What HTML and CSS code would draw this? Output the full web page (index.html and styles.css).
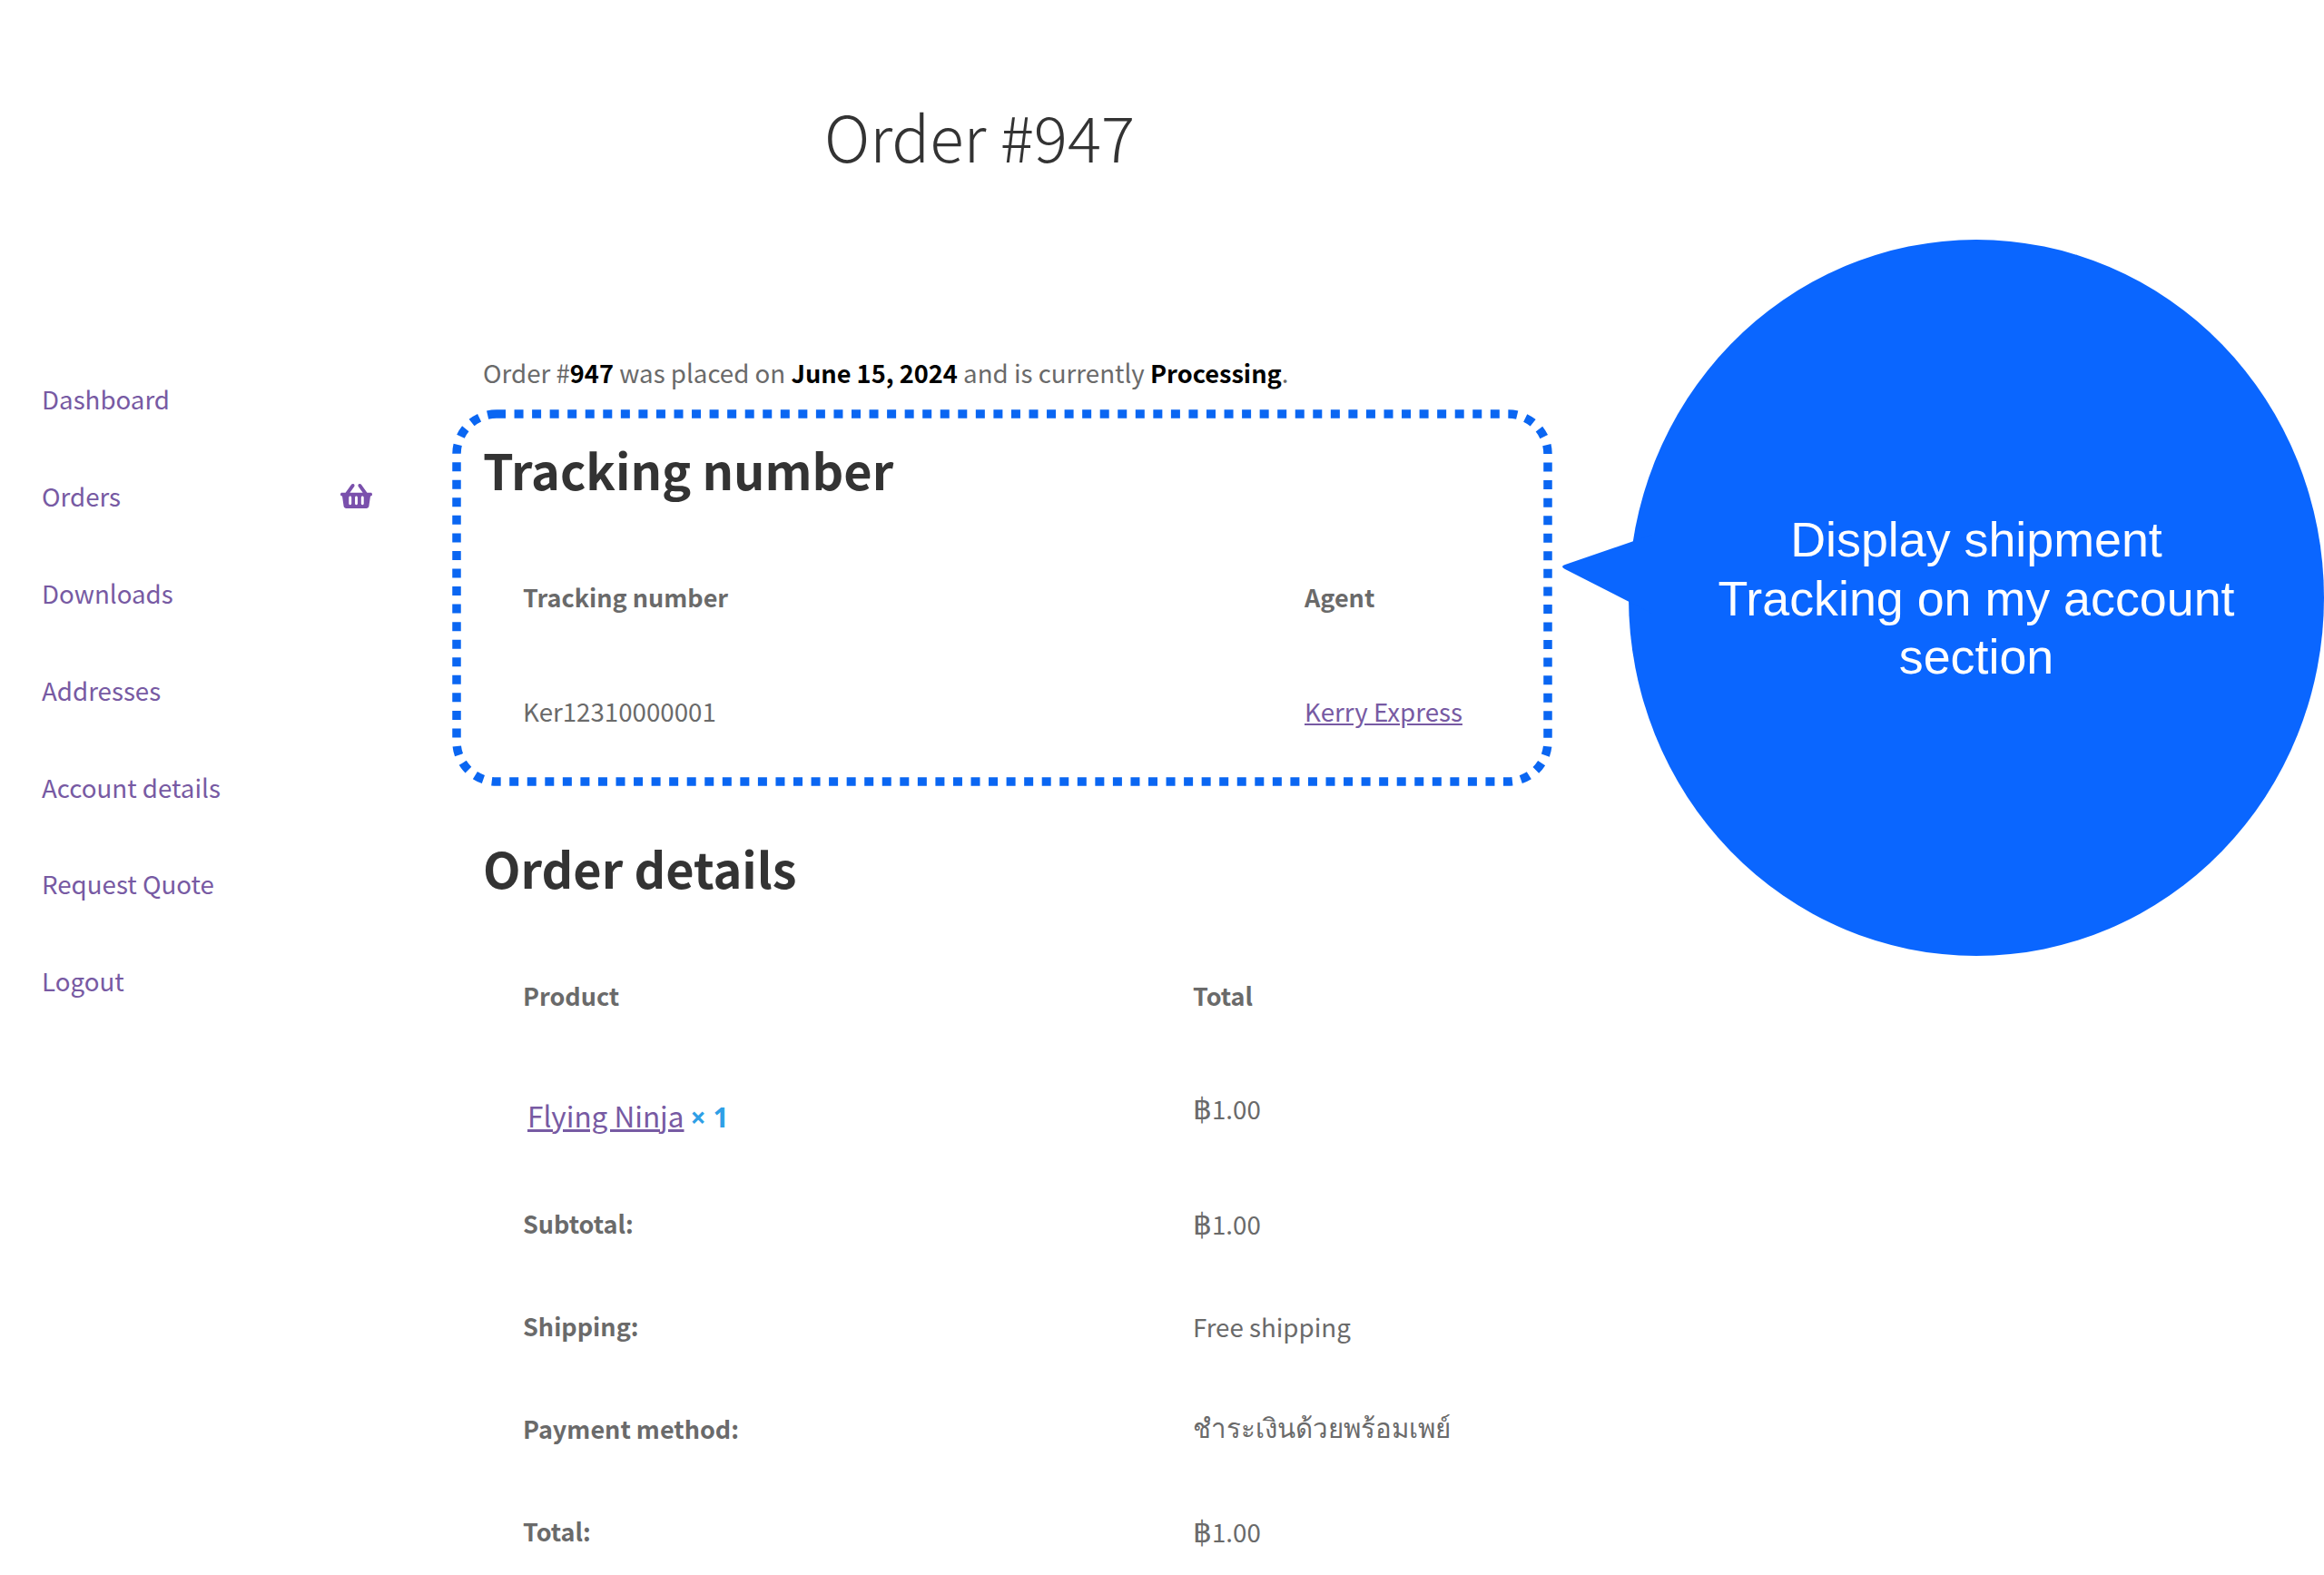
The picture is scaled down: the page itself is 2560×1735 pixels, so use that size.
FILE: index.html
```html
<!DOCTYPE html>
<html lang="en">
<head>
    <meta charset="UTF-8">
    <title>Order #947</title>
    <link rel="stylesheet" href="styles.css">
</head>
<body>
    <h1 class="page-title">Order #947</h1>

    <div class="account">
        <nav class="account-nav">
            <a href="#">Dashboard</a>
            <a href="#">Orders
                <svg class="basket" viewBox="0 0 576 512"><path d="M576 216v16c0 13.255-10.745 24-24 24h-8l-26.113 182.788C514.509 462.435 494.257 480 470.37 480H105.63c-23.887 0-44.139-17.565-47.518-41.212L32 256h-8c-13.255 0-24-10.745-24-24v-16c0-13.255 10.745-24 24-24h67.341l106.78-146.821c10.395-14.292 30.407-17.453 44.701-7.058 14.293 10.395 17.453 30.408 7.058 44.701L170.477 192h235.046L326.12 82.821c-10.395-14.292-7.234-34.306 7.059-44.701 14.291-10.395 34.306-7.235 44.701 7.058L484.659 192H552c13.255 0 24 10.745 24 24zM312 392V280c0-13.255-10.745-24-24-24s-24 10.745-24 24v112c0 13.255 10.745 24 24 24s24-10.745 24-24zm112 0V280c0-13.255-10.745-24-24-24s-24 10.745-24 24v112c0 13.255 10.745 24 24 24s24-10.745 24-24zm-224 0V280c0-13.255-10.745-24-24-24s-24 10.745-24 24v112c0 13.255 10.745 24 24 24s24-10.745 24-24z"/></svg>
            </a>
            <a href="#">Downloads</a>
            <a href="#">Addresses</a>
            <a href="#">Account details</a>
            <a href="#">Request Quote</a>
            <a href="#">Logout</a>
        </nav>

        <main class="account-content">
            <p class="order-summary">Order #<b>947</b> was placed on <b>June 15, 2024</b> and is currently <b>Processing</b>.</p>

            <section class="tracking">
                <h2>Tracking number</h2>
                <table class="tracking-table">
                    <tr>
                        <th>Tracking number</th>
                        <th>Agent</th>
                    </tr>
                    <tr>
                        <td>Ker12310000001</td>
                        <td><a href="#">Kerry Express</a></td>
                    </tr>
                </table>
                <svg class="tracking-outline" viewBox="0 0 1212 415"><rect x="5" y="5" width="1202" height="405" rx="44" ry="44"/></svg>
            </section>

            <section class="details">
                <h2>Order details</h2>
                <table class="details-table">
                    <tr class="row-head">
                        <th>Product</th>
                        <th>Total</th>
                    </tr>
                    <tr class="row-item">
                        <td><a href="#">Flying Ninja</a> <strong>× 1</strong></td>
                        <td><span class="baht">฿</span>1.00</td>
                    </tr>
                    <tr>
                        <th>Subtotal:</th>
                        <td><span class="baht">฿</span>1.00</td>
                    </tr>
                    <tr>
                        <th>Shipping:</th>
                        <td>Free shipping</td>
                    </tr>
                    <tr>
                        <th>Payment method:</th>
                        <td class="thai" lang="th">ชำระเงินด้วยพร้อมเพย์</td>
                    </tr>
                    <tr>
                        <th>Total:</th>
                        <td><span class="baht">฿</span>1.00</td>
                    </tr>
                </table>
            </section>
        </main>
    </div>

    <div class="callout">
        <svg class="callout-shape" viewBox="0 0 840 789"><ellipse cx="457" cy="394.5" rx="383" ry="394.5"/><path d="M100 325L4 358Q-2 360 4 363L100 412Z"/></svg>
        <p class="callout-text">Display shipment<br>Tracking on my account<br>section</p>
    </div>
</body>
</html>
```

FILE: styles.css
```css
* {
    margin: 0;
    padding: 0;
    box-sizing: border-box;
}

body {
    position: relative;
    height: 1735px;
    overflow: hidden;
    background: #fff;
    color: #6a6a6a;
    font-family: "Noto Sans CJK SC", "Noto Sans", sans-serif;
    font-size: 27.7px;
}

.page-title {
    width: 2158px;
    padding-top: 102px;
    text-align: center;
    color: #333;
    font-size: 69.3px;
    font-weight: 300;
    line-height: 94px;
}

.account {
    display: flex;
    margin-top: 189px;
}

.account-nav {
    display: flex;
    flex-direction: column;
    width: 532px;
    padding: 1px 122px 0 46px;
}

.account-nav a {
    display: flex;
    align-items: center;
    justify-content: space-between;
    height: 106.8px;
    color: #775aa3;
    text-decoration: none;
}

.basket {
    width: 35px;
    height: 31px;
    fill: #7a50ac;
}

.account-content {
    flex: 1;
    padding-top: 5px;
}

.order-summary {
    line-height: 40px;
}

.order-summary b {
    color: #000;
    font-size: 27.2px;
    font-weight: 600;
}

.tracking {
    position: relative;
    height: 415px;
    margin-top: 21px;
}

.tracking-outline {
    position: absolute;
    left: -34.5px;
    top: 0;
    width: 1212px;
    height: 415px;
}

.tracking-outline rect {
    fill: none;
    stroke: #0a66f2;
    stroke-width: 9.5;
    stroke-dasharray: 10 9.55;
}

h2 {
    color: #333;
    font-size: 54px;
    font-weight: 700;
    line-height: 76px;
}

.tracking h2 {
    padding-top: 28px;
}

table {
    border-collapse: collapse;
    text-align: left;
}

th {
    font-size: 27px;
    font-weight: 600;
}

th, td {
    padding-left: 44px;
}

.tracking-table {
    margin-top: 39px;
}

.tracking-table th:first-child {
    width: 861px;
}

.tracking-table tr {
    height: 126px;
}

a {
    color: #775aa3;
}

.details {
    margin-top: 52px;
}

.details-table {
    margin-top: 49px;
}

.details-table tr {
    height: 113px;
}

.details-table tr > :first-child {
    width: 738px;
}

.details-table .row-head {
    height: 107px;
}

.details-table .row-item {
    height: 141px;
}

.details-table .row-item td:first-child {
    padding-left: 49px;
    padding-top: 14px;
    font-size: 31.5px;
}

.details-table strong {
    color: #2f9fe6;
    font-family: "Noto Sans", sans-serif;
    font-size: 30px;
}

.details-table .thai {
    font-size: 29.5px;
}

.baht {
    font-family: "Liberation Sans", sans-serif;
    font-size: 33px;
}

.callout {
    position: absolute;
    left: 1720px;
    top: 264px;
    width: 840px;
    height: 789px;
}

.callout-shape {
    position: absolute;
    inset: 0;
    width: 100%;
    height: 100%;
    overflow: visible;
    fill: #0a66ff;
}

.callout-text {
    position: absolute;
    left: 74px;
    right: 0;
    top: 298px;
    text-align: center;
    color: #fff;
    font-family: "Liberation Sans", Arial, sans-serif;
    font-size: 53.8px;
    line-height: 64.5px;
}
```
